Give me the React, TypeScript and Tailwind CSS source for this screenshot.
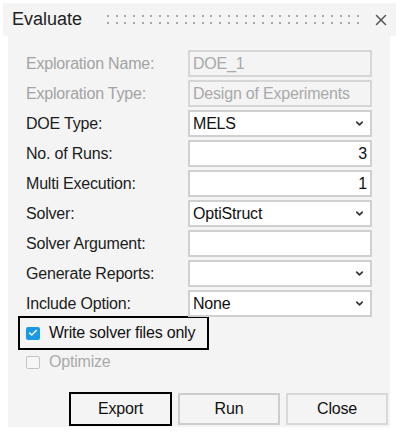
import { Check, ChevronDown, X } from "lucide-react";

type Row = {
    label: string;
    value?: string;
    disabled?: boolean;
    select?: boolean;
    right?: boolean;
};

const rows: Row[] = [
    { label: "Exploration Name:", value: "DOE_1", disabled: true },
    { label: "Exploration Type:", value: "Design of Experiments", disabled: true },
    { label: "DOE Type:", value: "MELS", select: true },
    { label: "No. of Runs:", value: "3", right: true },
    { label: "Multi Execution:", value: "1", right: true },
    { label: "Solver:", value: "OptiStruct", select: true },
    { label: "Solver Argument:", value: "" },
    { label: "Generate Reports:", value: "", select: true },
    { label: "Include Option:", value: "None", select: true },
];

function Dots() {
    // grip pattern in the title bar
    return (
        <div className="flex flex-col gap-[5px] ml-[25px] w-[252px]">
            {[0, 1].map((r) => (
                <div key={r} className="flex justify-between">
                    {Array.from({ length: 30 }).map((_, i) => (
                        <span key={i} className="w-[2px] h-[2px] bg-[#a8a8a8]" />
                    ))}
                </div>
            ))}
        </div>
    );
}

function Field({ row }: { row: Row }) {
    return (
        <div className="flex items-center h-[27px]">
            <div className={`w-[180px] pl-[18px] ${row.disabled ? "text-[#a3a3a3]" : "text-[#1c1c1c]"}`}>
                {row.label}
            </div>
            <div
                className={`flex items-center w-[184px] h-[27px] border-2 px-[3px] ${
                    row.disabled ? "border-[#d6d6d6] bg-[#f4f4f4] text-[#a9a9a9]" : "border-[#d0d0d0] bg-white text-[#111]"
                }`}
            >
                <span className={`flex-1 ${row.right ? "text-right" : ""}`}>{row.value}</span>
                {row.select && <ChevronDown size={11} strokeWidth={3.5} className="text-[#333] mr-[2px]" />}
            </div>
        </div>
    );
}

export default function App() {
    return (
        <div className="w-[396px] h-[439px] bg-white pt-[3px] pl-[3px] text-[16px] tracking-[-0.2px]" style={{ fontFamily: '"Liberation Sans", Arial, sans-serif' }}>
            <div className="flex items-center h-[33px] bg-[#f4f4f4] pl-[9px]">
                <span className="text-[18px] tracking-normal text-[#222]">Evaluate</span>
                <Dots />
                <X size={18} strokeWidth={2} className="ml-[13px] text-[#555]" />
            </div>
            <div className="ml-[5px] w-[382px] h-[391px] bg-[#f4f4f4] pt-[14px]">
                <div className="flex flex-col gap-[3px]">
                    {rows.map((r) => (
                        <Field key={r.label} row={r} />
                    ))}
                </div>
                <div className="mt-[-1px] ml-[10px] w-[191px] h-[34px] border-2 border-black flex items-center pl-[6px]">
                    <span className="w-[14px] h-[13px] bg-[#1a9ae6] rounded-[2px] flex items-center justify-center">
                        <Check size={10} strokeWidth={3.5} className="text-white" />
                    </span>
                    <span className="ml-[9px] text-[#111]">Write solver files only</span>
                </div>
                <div className="flex items-center ml-[18px] mt-[5px] h-[14px]">
                    <span className="w-[14px] h-[13px] border border-[#c4c4c4] bg-[#f6f6f6] rounded-[2px]" />
                    <span className="ml-[9px] text-[#aaa]">Optimize</span>
                </div>
                <div className="flex mt-[23px] ml-[61px] gap-[6px]">
                    <button className="w-[103px] h-[34px] border-2 border-black bg-[#f4f4f4] text-[#111]">Export</button>
                    <button className="w-[102px] h-[32px] mt-[1px] border-2 border-[#cdcdcd] bg-[#f4f4f4] text-[#111]">Run</button>
                    <button className="w-[102px] h-[32px] mt-[1px] border-2 border-[#d8d8d8] bg-[#f4f4f4] text-[#111]">Close</button>
                </div>
            </div>
        </div>
    );
}
